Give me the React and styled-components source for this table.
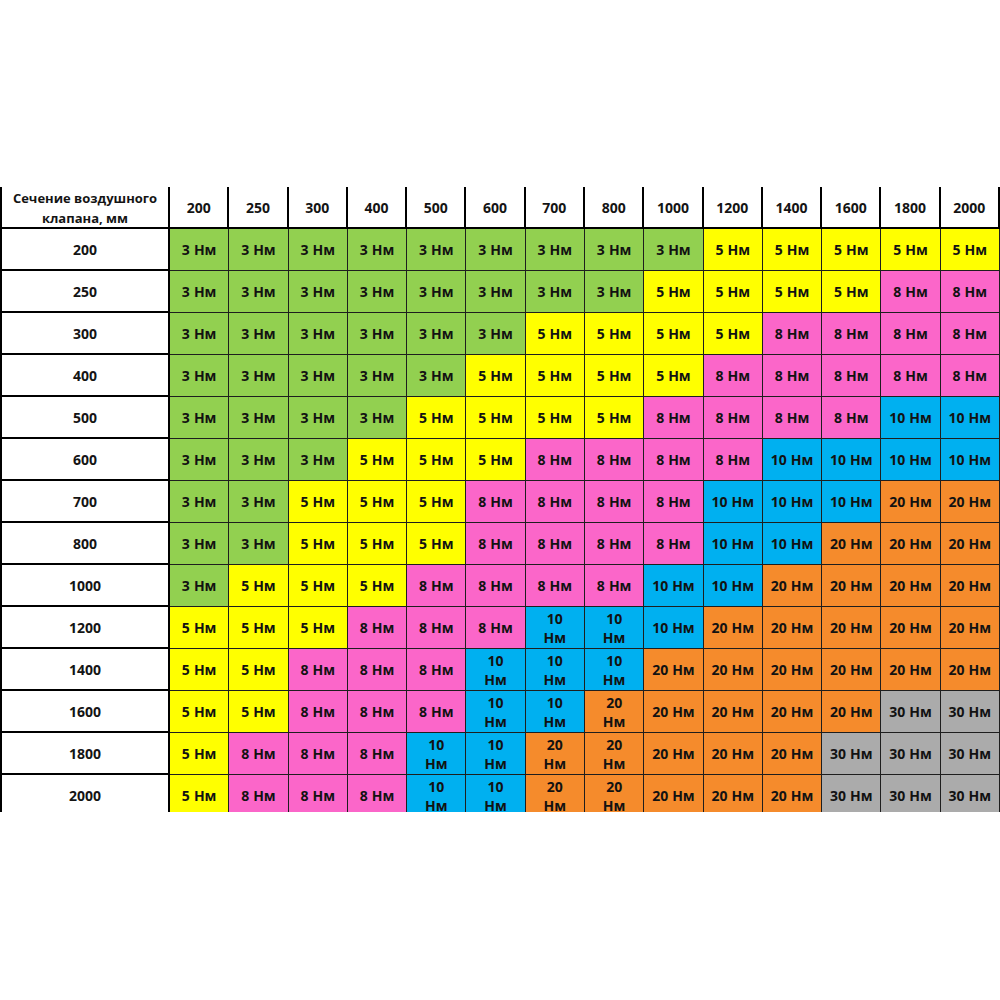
import { Fragment } from 'react';
import styled, { createGlobalStyle } from 'styled-components';

const GlobalStyle = createGlobalStyle`
  html, body {
    margin: 0;
    padding: 0;
    background: #fff;
  }

  body {
    font-family: "Open Sans", "Liberation Sans", sans-serif;
    color: #141414;
  }
`;

const SIZES = [200, 250, 300, 400, 500, 600, 700, 800, 1000, 1200, 1400, 1600, 1800, 2000];

// torque per row, one value per column (Нм)
const TORQUE = [
  '3 3 3 3 3 3 3 3 3 5 5 5 5 5',
  '3 3 3 3 3 3 3 3 5 5 5 5 8 8',
  '3 3 3 3 3 3 5 5 5 5 8 8 8 8',
  '3 3 3 3 3 5 5 5 5 8 8 8 8 8',
  '3 3 3 3 5 5 5 5 8 8 8 8 10 10',
  '3 3 3 5 5 5 8 8 8 8 10 10 10 10',
  '3 3 5 5 5 8 8 8 8 10 10 10 20 20',
  '3 3 5 5 5 8 8 8 8 10 10 20 20 20',
  '3 5 5 5 8 8 8 8 10 10 20 20 20 20',
  '5 5 5 8 8 8 10 10 10 20 20 20 20 20',
  '5 5 8 8 8 10 10 10 20 20 20 20 20 20',
  '5 5 8 8 8 10 10 20 20 20 20 20 30 30',
  '5 8 8 8 10 10 20 20 20 20 20 30 30 30',
  '5 8 8 8 10 10 20 20 20 20 20 30 30 30',
].map((row) => row.split(' ').map(Number));

const COLORS = {
  3: '#92d050',
  5: '#ffff00',
  8: '#fb66c9',
  10: '#00b0f0',
  20: '#f58b2c',
  30: '#ababab',
};

const Page = styled.div`
  padding-top: 187px;
`;

const Table = styled.div`
  display: grid;
  grid-template-columns: 170px repeat(14, 1fr);
  grid-auto-rows: 42px;
  grid-template-rows: 42px;
  height: 625px;
  overflow: hidden;
`;

const HeadCell = styled.div`
  display: flex;
  align-items: center;
  justify-content: center;
  text-align: center;
  box-sizing: border-box;
  border-right: 2px solid #000;
  border-bottom: 2px solid #000;
  border-left: ${({ $first }) => ($first ? '2px solid #000' : 'none')};
  background: #fff;
  font-weight: 700;
  font-size: ${({ $first }) => ($first ? '13px' : '14px')};
  line-height: 20px;
  padding-top: 2px;
`;

const RowLabel = styled.div`
  display: flex;
  align-items: center;
  justify-content: center;
  box-sizing: border-box;
  border-left: 2px solid #000;
  border-right: 2px solid #000;
  border-bottom: 2px solid #000;
  background: #fff;
  font-weight: 700;
  font-size: 14px;
`;

const Cell = styled.div`
  display: flex;
  flex-direction: ${({ $stacked }) => ($stacked ? 'column' : 'row')};
  align-items: center;
  justify-content: center;
  gap: ${({ $stacked }) => ($stacked ? '0' : '4px')};
  box-sizing: border-box;
  border-right: 1px solid #1e1e1e;
  border-bottom: 1px solid #1e1e1e;
  background: ${({ $value }) => COLORS[$value]};
  font-weight: 700;
  font-size: 14px;
  line-height: 19px;
  color: #121212;
`;

const App = () => (
  <>
    <GlobalStyle />
    <Page>
      <Table>
        <HeadCell $first>
          Сечение воздушного
          <br />
          клапана, мм
        </HeadCell>
        {SIZES.map((size) => (
          <HeadCell key={size}>{size}</HeadCell>
        ))}
        {TORQUE.map((row, r) => (
          <Fragment key={SIZES[r]}>
            <RowLabel>{SIZES[r]}</RowLabel>
            {row.map((value, c) => {
              // Excel wrapped the two-digit values in the 500–800 columns
              const stacked = value >= 10 && c >= 4 && c <= 7;
              return (
                <Cell key={SIZES[c]} $value={value} $stacked={stacked}>
                  <span>{value}</span>
                  <span>Нм</span>
                </Cell>
              );
            })}
          </Fragment>
        ))}
      </Table>
    </Page>
  </>
);

export default App;
